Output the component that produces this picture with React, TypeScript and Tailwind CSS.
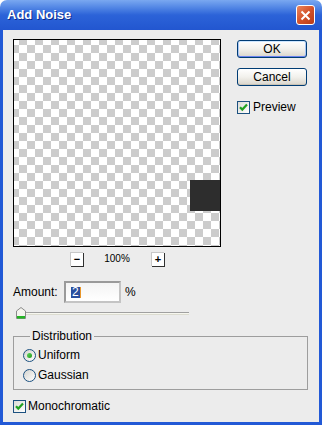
import React from 'react';

const font = "font-['Liberation_Sans',Arial,sans-serif]";

function XpCheckbox({ checked }: { checked: boolean }) {
  return (
    <span className="w-[13px] h-[13px] border border-[#1c5180] bg-gradient-to-br from-[#dcdcd7] to-[#ffffff] flex items-center justify-center shrink-0">
      {checked && (
        <svg width="11" height="11" viewBox="0 0 11 11">
          <path d="M2 5.2 L4.3 7.6 L9 2.6" fill="none" stroke="#21a121" strokeWidth="2.2" />
        </svg>
      )}
    </span>
  );
}

function XpRadio({ selected }: { selected: boolean }) {
  return (
    <span className="w-[13px] h-[13px] rounded-full border border-[#1c5180] bg-gradient-to-br from-[#d4d4cf] to-[#ffffff] flex items-center justify-center shrink-0">
      {selected && <span className="w-[5px] h-[5px] rounded-full bg-gradient-to-br from-[#5fd85a] to-[#1c9a1c]" />}
    </span>
  );
}

function XpButton({ label, isDefault }: { label: string; isDefault?: boolean }) {
  return (
    <button
      className={
        'w-[70px] h-[18px] rounded-[3px] border border-[#003c74] bg-gradient-to-b from-[#ffffff] via-[#f2f1ec] to-[#d9d5cb] text-[12px] leading-none text-black flex items-center justify-center ' +
        (isDefault
          ? 'shadow-[inset_0_1px_0_#cee7ff,inset_0_-1px_0_#6982ee,inset_1px_0_0_#a9c6f5,inset_-1px_0_0_#a9c6f5]'
          : 'shadow-[inset_0_1px_0_#ffffff,inset_0_-1px_0_#c9c3b6]')
      }
    >
      {label}
    </button>
  );
}

function ZoomButton({ sign }: { sign: string }) {
  return (
    <span className="w-[13px] h-[14px] bg-white border-t border-l border-[#c8c8c8] shadow-[1px_1px_0_#303030] flex items-center justify-center text-[11px] leading-none font-bold text-black">
      {sign}
    </span>
  );
}

export default function App() {
  return (
    <div className={`w-[322px] h-[425px] flex flex-col ${font} text-[12px] text-black`}>
      {/* Title bar */}
      <div className="h-[30px] shrink-0 rounded-t-[7px] bg-gradient-to-b from-[#7aa8f0] via-[#2c63d8] to-[#2256d0] flex items-start justify-between pl-[7px] pr-[7px]">
        <span className="mt-[8px] text-[13px] font-bold text-white leading-none [text-shadow:1px_1px_0_#0c2a8a]">
          Add Noise
        </span>
        <span className="mt-[5px] w-[19px] h-[20px] rounded-[3px] border border-white bg-gradient-to-br from-[#e9855c] via-[#d4522a] to-[#b83c19] flex items-center justify-center">
          <svg width="11" height="11" viewBox="0 0 11 11">
            <path d="M1.5 1.5 L9.5 9.5 M9.5 1.5 L1.5 9.5" stroke="#ffffff" strokeWidth="2" />
          </svg>
        </span>
      </div>

      {/* Body */}
      <div className="flex-1 bg-[#ececec] border-x-[3px] border-b-[3px] border-[#2259d6] flex flex-col pl-[10px] pt-[9px]">
        <div className="flex">
          <div className="flex flex-col">
            <div className="w-[208px] h-[208px] border border-black bg-[conic-gradient(#cccccc_25%,#ffffff_0_50%,#cccccc_0_75%,#ffffff_0)] bg-[length:16px_16px] bg-[position:-3px_-3px] flex flex-col">
              <div className="mt-[140px] flex justify-end">
                <div className="w-[30px] h-[31px] bg-[#2d2d2d]" />
              </div>
            </div>
            <div className="mt-[5px] flex items-center">
              <span className="ml-[57px]">
                <ZoomButton sign="−" />
              </span>
              <span className="w-[68px] text-center text-[10px] leading-[14px]">100%</span>
              <ZoomButton sign="+" />
            </div>
          </div>

          <div className="ml-[16px] pt-[1px] flex flex-col">
            <XpButton label="OK" isDefault />
            <div className="mt-[10px]">
              <XpButton label="Cancel" />
            </div>
            <label className="mt-[15px] flex items-center gap-[3px] leading-[13px]">
              <XpCheckbox checked />
              <span>Preview</span>
            </label>
          </div>
        </div>

        {/* Amount */}
        <div className="mt-[15px] flex items-center h-[22px]">
          <span className="w-[51px]">Amount:</span>
          <div className="w-[57px] h-[22px] border-2 border-[#9a9a9a] border-b-[#c4c4c4] border-r-[#c4c4c4] bg-gradient-to-b from-[#f4f4f4] to-[#ffffff] flex items-center pl-[5px]">
            <span className="bg-[#2a4f9e] text-white leading-[11px] px-[1px]">2</span>
            <span className="w-[1px] h-[11px] bg-[#e8962a]" />
          </div>
          <span className="ml-[4px]">%</span>
        </div>

        {/* Slider */}
        <div className="mt-[4px] ml-[3px] w-[173px] h-[12px] flex items-center">
          <div className="relative w-full h-[3px] border-t border-[#a0a0a0] bg-[#f7f7ef] border-b border-b-[#dcdcd0]">
            <svg className="absolute left-0 -top-[6px]" width="10" height="12" viewBox="0 0 10 12">
              <path d="M0.5 4 L5 0.5 L9.5 4 L9.5 11.5 L0.5 11.5 Z" fill="#f4f4ee" stroke="#8a8a8a" />
              <rect x="1" y="9" width="8" height="2.5" fill="#23b523" />
            </svg>
          </div>
        </div>

        {/* Distribution */}
        <fieldset className="mt-[10px] w-[295px] border border-[#9d9d9d] px-[16px] pb-[7px]">
          <legend className="px-[2px] leading-[14px]">Distribution</legend>
          <div className="-ml-[7px] mt-[6px] flex flex-col gap-[7px]">
            <label className="flex items-center gap-[2px] leading-[13px]">
              <XpRadio selected />
              <span>Uniform</span>
            </label>
            <label className="flex items-center gap-[2px] leading-[13px]">
              <XpRadio selected={false} />
              <span>Gaussian</span>
            </label>
          </div>
        </fieldset>

        <label className="mt-[10px] flex items-center gap-[2px] leading-[13px]">
          <XpCheckbox checked />
          <span>Monochromatic</span>
        </label>
      </div>
    </div>
  );
}
